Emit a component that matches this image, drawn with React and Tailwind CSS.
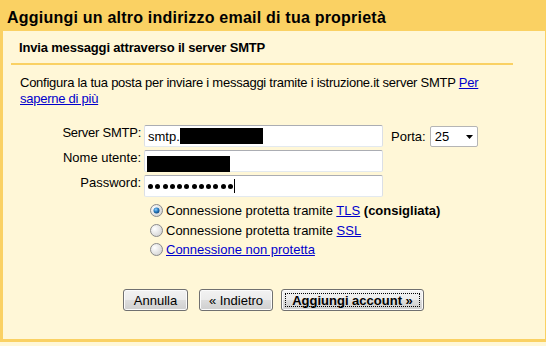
import React from "react";

function Radio({ checked }) {
  return (
    <svg width="13" height="13" viewBox="0 0 13 13" className="shrink-0">
      <defs>
        <radialGradient id="rg" cx="0.35" cy="0.35" r="0.8">
          <stop offset="0" stopColor="#ffffff" />
          <stop offset="1" stopColor="#cfcfcf" />
        </radialGradient>
        <radialGradient id="rb" cx="0.4" cy="0.35" r="0.7">
          <stop offset="0" stopColor="#8fd0ff" />
          <stop offset="0.5" stopColor="#2a7fc4" />
          <stop offset="1" stopColor="#0c3e74" />
        </radialGradient>
      </defs>
      <circle cx="6.5" cy="6.5" r="6" fill="url(#rg)" stroke="#8a8a8a" strokeWidth="1" />
      {checked && <circle cx="6.5" cy="6.5" r="3" fill="url(#rb)" />}
    </svg>
  );
}

function Btn({ children, w, bold, focus, className = "" }) {
  return (
    <div
      className={`relative h-[22px] flex items-center justify-center border border-[#707070] rounded-[3px] shadow-[inset_0_0_0_1px_#fbfbfb] bg-[linear-gradient(#f2f2f2,#ebebeb_50%,#dddddd_50%,#cfcfcf)] leading-[15px] ${bold ? "font-bold" : ""} ${w} ${className}`}
    >
      {children}
      {focus && <span className="absolute inset-[3px] border border-dotted border-black" />}
    </div>
  );
}

const inputCls =
  "w-[239px] h-[22px] bg-white border border-t-[#abadb3] border-x-[#dbdfe6] border-b-[#e3e9ef] rounded-[2px] ml-[3px]";

export default function App() {
  return (
    <div className="w-[546px] h-[346px] bg-[#fff7d7] font-['Liberation_Sans',Arial,sans-serif] text-[13px] text-black">
      <div className="bg-[#fad163] pl-[3px] pr-[1px] pb-[3px]">
        <div className="h-[31px] pt-[9px] pl-[4px] text-[16px] font-bold leading-[18px] tracking-[0.22px]">
          Aggiungi un altro indirizzo email di tua proprietà
        </div>
        <div className="bg-[#fff7d7] h-[308px] flex flex-col">
          <div className="ml-[8px] mr-[32px] border-b-2 border-[#fad163] pt-[9px] pb-[8px] pl-[8px] font-bold leading-[15px] tracking-[-0.17px]">
            Invia messaggi attraverso il server SMTP
          </div>
          <p className="mt-[10px] ml-[17px] mr-[32px] leading-[16px] tracking-[-0.25px]">
            Configura la tua posta per inviare i messaggi tramite i istruzione.it server SMTP{" "}
            <a className="text-[#0000cc] underline cursor-pointer">Per saperne di più</a>
          </p>

          <div className="mt-[18px] flex flex-col gap-[3px]">
            <div className="flex items-start">
              <div className="w-[138px] text-right leading-[16px] tracking-[-0.25px]">Server SMTP:</div>
              <div className={`${inputCls} flex items-center pl-[3px] leading-[15px]`}>
                <span>smtp.</span>
                <span className="inline-block w-[83px] h-[16px] bg-black" />
              </div>
              <div className="ml-[8px] leading-[15px] mt-[4px]">Porta:</div>
              <div className="ml-[4px] mt-[1px] w-[48px] h-[21px] bg-white border border-[#b5b5b5] rounded-[2px] flex items-center justify-between pl-[4px] pr-[4px] leading-[15px]">
                <span>25</span>
                <svg width="7" height="4" viewBox="0 0 7 4">
                  <polygon points="0,0 7,0 3.5,4" fill="#000" />
                </svg>
              </div>
            </div>
            <div className="flex items-start">
              <div className="w-[138px] text-right leading-[16px]">Nome utente:</div>
              <div className={`${inputCls} pl-[2px] pt-[5px]`}>
                <div className="w-[83px] h-[16px] bg-black" />
              </div>
            </div>
            <div className="flex items-start">
              <div className="w-[138px] text-right leading-[16px]">Password:</div>
              <div className={`${inputCls} flex items-center pl-[3px]`}>
                <div className="flex items-center gap-[2.25px]">
                  {Array.from({ length: 12 }).map((_, i) => (
                    <span key={i} className="w-[5px] h-[5px] rounded-full bg-black" />
                  ))}
                </div>
                <span className="ml-[1px] w-[1px] h-[14px] bg-black" />
              </div>
            </div>
          </div>

          <div className="mt-[6px] ml-[147px] flex flex-col leading-[16px]">
            <div className="h-[20px] flex items-start gap-[3px]">
              <span className="mt-[1px]"><Radio checked /></span>
              <span>
                Connessione protetta tramite{" "}
                <a className="text-[#0000cc] underline">TLS</a>{" "}
                <b>(consigliata)</b>
              </span>
            </div>
            <div className="h-[19px] flex items-start gap-[3px]">
              <span className="mt-[1px]"><Radio /></span>
              <span>
                Connessione protetta tramite{" "}
                <a className="text-[#0000cc] underline">SSL</a>
              </span>
            </div>
            <div className="h-[19px] flex items-start gap-[3px]">
              <span className="mt-[1px]"><Radio /></span>
              <a className="text-[#0000cc] underline">Connessione non protetta</a>
            </div>
          </div>

          <div className="mt-[28px] ml-[120px] flex">
            <Btn w="w-[65px]">Annulla</Btn>
            <Btn w="w-[74px]" className="ml-[11px]">« Indietro</Btn>
            <Btn w="w-[143px]" bold focus className="ml-[8px]">Aggiungi account »</Btn>
          </div>
        </div>
      </div>
    </div>
  );
}
